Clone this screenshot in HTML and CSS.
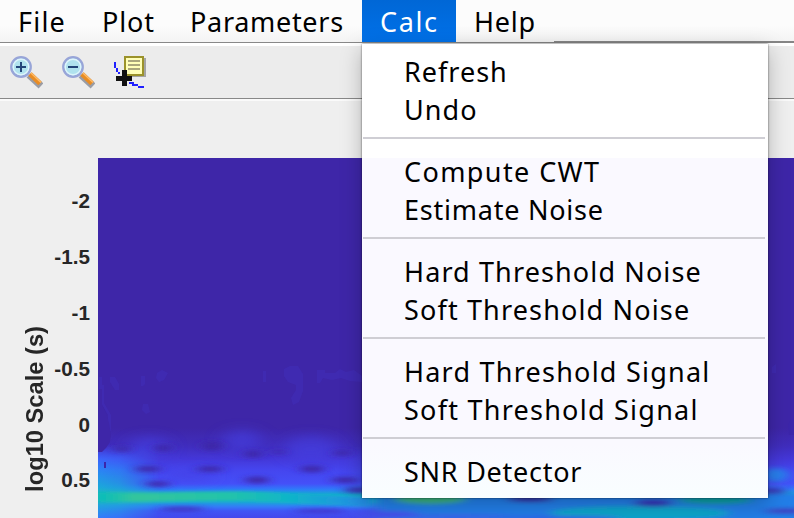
FILE: index.html
```html
<!DOCTYPE html>
<html lang="en">
<head>
<meta charset="utf-8">
<title>Wavelet viewer</title>
<link rel="stylesheet" href="styles.css">
</head>
<body>
<div class="window">
  <nav class="menubar">
    <span class="menu file">File</span>
    <span class="menu plot-menu">Plot</span>
    <span class="menu params">Parameters</span>
    <span class="menu calc">Calc</span>
    <span class="menu help">Help</span>
  </nav>
  <div class="toolbar">
    <svg class="tool" width="34" height="34" viewBox="0 0 34 34">
      <path d="M20 19L32 30" stroke="#999ca5" stroke-width="7"/>
      <path d="M21 18L31 27.500" stroke="#e88c24" stroke-width="5"/>
      <path d="M22 17L32 26.500" stroke="#ffba66" stroke-width="1.5"/>
      <circle cx="12" cy="11" r="9.7" fill="#b0e2ee" stroke="#98a5d8" stroke-width="2.4"/>
      <circle cx="12" cy="11" r="7.8" fill="none" stroke="#def5fb" stroke-width="1.4"/>
      <path d="M7 11H17M12 6V16" stroke="#234579" stroke-width="2"/>
    </svg>
    <svg class="tool" width="34" height="34" viewBox="0 0 34 34">
      <path d="M20 19L32 30" stroke="#999ca5" stroke-width="7"/>
      <path d="M21 18L31 27.500" stroke="#e88c24" stroke-width="5"/>
      <path d="M22 17L32 26.500" stroke="#ffba66" stroke-width="1.5"/>
      <circle cx="12" cy="11" r="9.7" fill="#b0e2ee" stroke="#98a5d8" stroke-width="2.4"/>
      <circle cx="12" cy="11" r="7.8" fill="none" stroke="#def5fb" stroke-width="1.4"/>
      <path d="M7 11H17" stroke="#234579" stroke-width="2"/>
    </svg>
    <svg class="tool" width="34" height="34" viewBox="0 0 34 34" shape-rendering="crispEdges">
      <path d="M13 2H33V21H13z" fill="#a4a4a4"/>
      <path d="M12 1H30V19H12z" fill="#ffffb8" stroke="#9b922a" stroke-width="2"/>
      <path d="M15 5H27M15 9H27M15 13H27" stroke="#aaa77c" stroke-width="2"/>
      <path d="M2 6V12M4 12V16M6 16V18M16 27H20V29H25M25 31H31" stroke="#2020ff" stroke-width="2" fill="none"/>
      <path d="M3 22.500H19M11 14V30" stroke="#111" stroke-width="5"/>
    </svg>
  </div>
  <main class="figure">
    <div class="axis-title"><span>log10 Scale (s)</span></div>
    <div class="ticks">
      <span>-2</span><span>-1.5</span><span>-1</span><span>-0.5</span><span>0</span><span>0.5</span>
    </div>
    <svg class="heatmap" width="696" height="360" viewBox="98 158 696 360">
      <defs>
        <linearGradient id="base" gradientUnits="userSpaceOnUse" x1="0" y1="158" x2="0" y2="518">
          <stop offset="0" stop-color="#3e26a8"/>
          <stop offset=".75" stop-color="#3e26a8"/>
          <stop offset=".8" stop-color="#402dbd"/>
          <stop offset=".835" stop-color="#4437d8"/>
          <stop offset=".865" stop-color="#4545ee"/>
          <stop offset=".905" stop-color="#4450f8"/>
          <stop offset=".92" stop-color="#2f79fa"/>
          <stop offset=".936" stop-color="#12b1ca"/>
          <stop offset=".955" stop-color="#1aa6d8"/>
          <stop offset=".969" stop-color="#347af8"/>
          <stop offset=".98" stop-color="#4056f5"/>
          <stop offset="1" stop-color="#4547ed"/>
        </linearGradient>
        <linearGradient id="edge" gradientUnits="userSpaceOnUse" x1="0" y1="444" x2="0" y2="518">
          <stop offset="0" stop-color="#3f5cff" stop-opacity="0"/>
          <stop offset=".2" stop-color="#3a68fe" stop-opacity=".9"/>
          <stop offset=".35" stop-color="#2b84f4"/>
          <stop offset=".58" stop-color="#1ba8da"/>
          <stop offset=".71" stop-color="#1fc0b1"/>
          <stop offset=".84" stop-color="#20a0df"/>
          <stop offset="1" stop-color="#347bfc"/>
        </linearGradient>
        <linearGradient id="fade" gradientUnits="userSpaceOnUse" x1="98" y1="0" x2="160" y2="0">
          <stop offset="0" stop-color="#fff"/>
          <stop offset=".35" stop-color="#ccc"/>
          <stop offset="1" stop-color="#000"/>
        </linearGradient>
        <linearGradient id="ridge" gradientUnits="userSpaceOnUse" x1="98" y1="0" x2="362" y2="0">
          <stop offset="0" stop-color="#08bcbc"/>
          <stop offset=".14" stop-color="#34c59c"/>
          <stop offset=".5" stop-color="#22c3aa"/>
          <stop offset=".72" stop-color="#0fb5c8"/>
          <stop offset="1" stop-color="#238fe5"/>
        </linearGradient>
        <mask id="left"><rect x="98" y="440" width="65" height="78" fill="url(#fade)"/></mask>
        <filter id="soft" x="-50%" y="-100%" width="200%" height="300%"><feGaussianBlur stdDeviation="6 2.2"/></filter>
        <filter id="wide" x="-50%" y="-100%" width="200%" height="300%"><feGaussianBlur stdDeviation="9 6"/></filter>
        <filter id="line" filterUnits="userSpaceOnUse" x="80" y="480" width="310" height="38"><feGaussianBlur stdDeviation="3 1.8"/></filter>
      </defs>
      <rect x="98" y="158" width="696" height="360" fill="url(#base)"/>
      <g fill="#402cb4" opacity=".75">
        <path d="M98 377h4v8h2v18l7 12v16h-3v-16l-8-14zM110 377h5l4 7v6h-4l-5-8zM141 376h4v8l-2 2h-2zM157 373l5-3 6 3-4 7-5 2-3-4zM143 404h5l2 8-4 2-4-4zM263 371h3v11h-3zM284 369l6-3h8l5 8v17l-4 11-6 3-2-7 5-8v-5l-8-3-4-6zM317 370h8v3h10l5-4 6 3 8-2 8 6v6l-12-1-9-3-9 2-9-2-3 5h-3zM772 367l4-3v9h-4z"/>
      </g>
      <g fill="#4541e3" opacity=".65" filter="url(#wide)">
        <ellipse cx="149" cy="447" rx="21" ry="10"/><ellipse cx="242" cy="440" rx="20" ry="10"/>
        <ellipse cx="311" cy="449" rx="27" ry="13"/><ellipse cx="190" cy="475" rx="25" ry="6"/>
        <ellipse cx="355" cy="464" rx="12" ry="9"/>
      </g>
      <rect x="98" y="444" width="65" height="74" fill="url(#edge)" mask="url(#left)"/>
      <g fill="#3c25a6" filter="url(#soft)">
        <ellipse cx="122" cy="449" rx="8" ry="3"/><ellipse cx="163" cy="448" rx="8" ry="4"/>
        <ellipse cx="212" cy="446" rx="9" ry="5"/><ellipse cx="253" cy="454" rx="8" ry="4"/>
        <ellipse cx="279" cy="452" rx="6" ry="2"/><ellipse cx="342" cy="453" rx="8" ry="3"/>
        <ellipse cx="148" cy="469" rx="13" ry="3"/><ellipse cx="210" cy="469" rx="13" ry="3"/>
        <ellipse cx="158" cy="484" rx="12" ry="2.7"/><ellipse cx="257" cy="480" rx="12" ry="3.5"/>
        <ellipse cx="312" cy="469" rx="12" ry="3.5"/><ellipse cx="345" cy="480" rx="14" ry="3"/>
        <ellipse cx="358" cy="490" rx="14" ry="3"/>
      </g>
      <path d="M96 497C145 498 190 496 240 496C285 497 310 500 370 502" fill="none" stroke="url(#ridge)" stroke-width="9" filter="url(#line)"/>
      <g filter="url(#soft)">
        <ellipse cx="182" cy="509" rx="23" ry="2" fill="#3f2cb9"/>
        <ellipse cx="320" cy="511" rx="26" ry="2" fill="#4130c8"/>
        <rect x="378" y="493" width="430" height="30" fill="#247ee8"/>
        <ellipse cx="430" cy="499" rx="36" ry="5" fill="#3bb27b"/>
        <ellipse cx="385" cy="515" rx="35" ry="4" fill="#4450ed"/>
        <ellipse cx="455" cy="517" rx="60" ry="2" fill="#3b5cec"/>
        <ellipse cx="640" cy="513" rx="90" ry="7" fill="#10a6ca"/>
        <ellipse cx="715" cy="500" rx="37" ry="4" fill="#079f9e"/>
        <ellipse cx="530" cy="499" rx="23" ry="3" fill="#3523a0"/>
        <ellipse cx="653" cy="503" rx="19" ry="3.5" fill="#3528b8"/>
        <ellipse cx="560" cy="518" rx="60" ry="2" fill="#315ee9"/>
        <ellipse cx="788" cy="511" rx="24" ry="2.5" fill="#3c30bb"/>
        <ellipse cx="776" cy="475" rx="12" ry="7" fill="#2881ed"/>
        <ellipse cx="772" cy="491" rx="14" ry="3" fill="#3a2ab4"/>
      </g>
      <path d="M98 376h1v13h3v16l4 8 3 10 2 12-1 7-4 6-4 4h-4z" fill="#3e26a8"/>
      <path d="M104 462h2v6h-2zM788 425l3-6h3v16h-5z" fill="#3c26aa"/>
    </svg>
  </main>
  <section class="dropdown">
    <div class="group"><span class="refresh">Refresh</span><span class="undo">Undo</span></div>
    <div class="group"><span class="compute">Compute CWT</span><span class="estimate">Estimate Noise</span></div>
    <div class="group"><span class="hard-noise">Hard Threshold Noise</span><span class="soft-noise">Soft Threshold Noise</span></div>
    <div class="group"><span class="hard-signal">Hard Threshold Signal</span><span class="soft-signal">Soft Threshold Signal</span></div>
    <div class="group"><span class="snr">SNR Detector</span></div>
  </section>
</div>
</body>
</html>
```
FILE: styles.css
```css
* { box-sizing: border-box; }
body { margin: 0; background: #efefef; overflow: hidden; }
.window { width: 794px; height: 518px; position: relative; overflow: hidden; display: flex; flex-direction: column; font-family: "Noto Sans", "Open Sans", sans-serif; }
.menubar { display: flex; height: 43px; flex: none; background: linear-gradient(#fcfcfc 60%, #f4f4f4); border-bottom: 1px solid #888; color: #000; font-size: 27px; line-height: 44px; white-space: nowrap; }
.menu { height: 42px; flex: none; padding-left: 18px; }
.file { width: 84px; letter-spacing: 1.2px; }
.plot-menu { width: 88px; letter-spacing: .9px; }
.params { width: 190px; letter-spacing: .7px; }
.calc { width: 94px; letter-spacing: 1.6px; color: #fff; background: linear-gradient(#0067d6, #0071e9); }
.help { width: 98px; letter-spacing: .8px; }
.menubar::after { content: ""; flex: 1; height: 2px; margin-top: 41px; background: #868686; }
.toolbar { display: flex; flex: none; height: 56px; padding: 10px 0 0 9px; gap: 18px; background: #ececec; border-top: 3px solid #fff; border-bottom: 1px solid #888; }
.tool { display: block; flex: none; }
.figure { display: flex; flex: none; height: 419px; border-top: 2px solid #fafafa; background: #efefef; color: #262626; font-family: "Liberation Sans", sans-serif; font-weight: bold; }
.axis-title { width: 47px; height: 417px; padding-top: 225px; display: flex; flex-direction: column; align-items: flex-end; }
.axis-title span { writing-mode: vertical-rl; transform: rotate(180deg); font-size: 23.7px; line-height: 24px; white-space: nowrap; }
.ticks { width: 51px; padding: 86px 8px 0 0; display: flex; flex-direction: column; align-items: flex-end; font-size: 20.7px; line-height: 28px; gap: 27.9px; }
.heatmap { display: block; flex: none; margin-top: 57px; }
.dropdown { position: absolute; left: 362px; top: 44px; width: 406px; height: 454px; padding: 9px 3px 0 1px; background: linear-gradient(#fff 114px, #faf9ff 114px, #faf9ff 400px, #f9feff); box-shadow: 0 0 2px rgba(0,0,0,.6), 0 6px 20px rgba(0,0,0,.25); color: #000; font-size: 27px; line-height: 38px; }
.group { display: flex; flex-direction: column; padding: 0 0 8px 41px; margin-bottom: 14px; border-bottom: 2px solid #cfced4; white-space: nowrap; }
.group:last-child { border: 0; margin-bottom: 0; }
.refresh { letter-spacing: 1px; }
.undo { letter-spacing: 1.1px; }
.compute { letter-spacing: 1.4px; }
.estimate { letter-spacing: .77px; }
.hard-noise { letter-spacing: 1.12px; }
.soft-noise { letter-spacing: 1.15px; }
.hard-signal { letter-spacing: 1.23px; }
.soft-signal { letter-spacing: 1.25px; }
.snr { letter-spacing: .75px; }
```
